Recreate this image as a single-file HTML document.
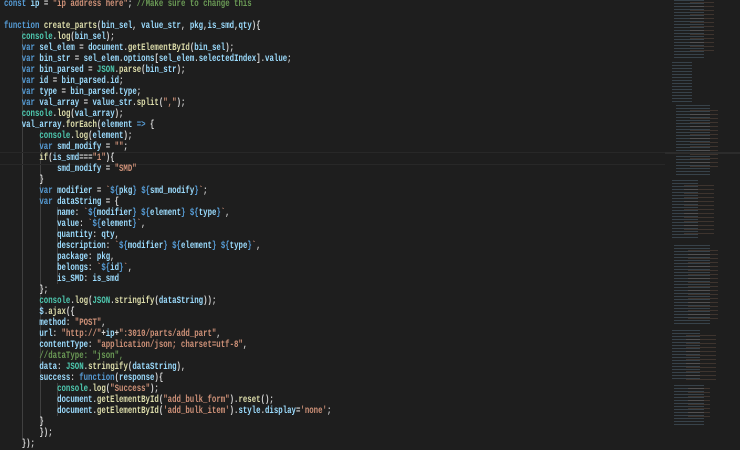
<!DOCTYPE html>
<html><head><meta charset="utf-8"><style>
html,body{margin:0;padding:0;background:#1e1e1e;width:740px;height:449px;overflow:hidden}
#code{position:absolute;left:4px;top:-1.5px;margin:0;font-family:"Liberation Mono",monospace;font-size:10px;line-height:11px;color:#d4d4d4;transform:scaleX(0.737);transform-origin:0 0;white-space:pre;font-weight:bold}
.v{color:#9cdcfe}.k{color:#569cd6}.f{color:#dcdcaa}.s{color:#ce9178}.c{color:#6a9955}.t{color:#4ec9b0}
.g{position:absolute;width:1px;background:#404040}
.mm{position:absolute;background-image:repeating-linear-gradient(to bottom,rgba(120,160,190,.28) 0 1px,transparent 1px 3px)}
.mo{position:absolute;background-image:repeating-linear-gradient(to bottom,rgba(190,140,110,.2) 0 1px,transparent 1px 4px)}
</style></head><body>
<div class="g" style="left:22px;top:31px;height:407px"></div>
<div class="g" style="left:40px;top:130px;height:297px"></div>
<div class="g" style="left:57px;top:207px;height:77px"></div>
<div class="g" style="left:57px;top:383px;height:33px"></div>
<div style="position:absolute;left:0;top:152px;width:665px;height:11px;border-top:1px solid #282828;border-bottom:1px solid #282828"></div>
<pre id="code"><span class="k">const</span> <span class="v">ip</span> = <span class="s">"ip address here"</span>; <span class="c">//Make sure to change this</span>

<span class="k">function</span> <span class="f">create_parts</span>(<span class="v">bin_sel</span>, <span class="v">value_str</span>, <span class="v">pkg</span>,<span class="v">is_smd</span>,<span class="v">qty</span>){
    <span class="t">console</span>.<span class="f">log</span>(<span class="v">bin_sel</span>);
    <span class="k">var</span> <span class="v">sel_elem</span> = <span class="v">document</span>.<span class="f">getElementById</span>(<span class="v">bin_sel</span>);
    <span class="k">var</span> <span class="v">bin_str</span> = <span class="v">sel_elem</span>.<span class="v">options</span>[<span class="v">sel_elem</span>.<span class="v">selectedIndex</span>].<span class="v">value</span>;
    <span class="k">var</span> <span class="v">bin_parsed</span> = <span class="t">JSON</span>.<span class="f">parse</span>(<span class="v">bin_str</span>);
    <span class="k">var</span> <span class="v">id</span> = <span class="v">bin_parsed</span>.<span class="v">id</span>;
    <span class="k">var</span> <span class="v">type</span> = <span class="v">bin_parsed</span>.<span class="v">type</span>;
    <span class="k">var</span> <span class="v">val_array</span> = <span class="v">value_str</span>.<span class="f">split</span>(<span class="s">","</span>);
    <span class="t">console</span>.<span class="f">log</span>(<span class="v">val_array</span>);
    <span class="v">val_array</span>.<span class="f">forEach</span>(<span class="v">element</span> <span class="k">=&gt;</span> {
        <span class="t">console</span>.<span class="f">log</span>(<span class="v">element</span>);
        <span class="k">var</span> <span class="v">smd_modify</span> = <span class="s">""</span>;
        <span class="f">if</span>(<span class="v">is_smd</span>===<span class="s">"1"</span>){
            <span class="v">smd_modify</span> = <span class="s">"SMD"</span>
        }
        <span class="k">var</span> <span class="v">modifier</span> = <span class="s">`</span><span class="k">${</span><span class="v">pkg</span><span class="k">}</span> <span class="k">${</span><span class="v">smd_modify</span><span class="k">}</span><span class="s">`</span>;
        <span class="k">var</span> <span class="v">dataString</span> = {
            <span class="v">name</span>: <span class="s">`</span><span class="k">${</span><span class="v">modifier</span><span class="k">}</span> <span class="k">${</span><span class="v">element</span><span class="k">}</span> <span class="k">${</span><span class="v">type</span><span class="k">}</span><span class="s">`</span>,
            <span class="v">value</span>: <span class="s">`</span><span class="k">${</span><span class="v">element</span><span class="k">}</span><span class="s">`</span>,
            <span class="v">quantity</span>: <span class="v">qty</span>,
            <span class="v">description</span>: <span class="s">`</span><span class="k">${</span><span class="v">modifier</span><span class="k">}</span> <span class="k">${</span><span class="v">element</span><span class="k">}</span> <span class="k">${</span><span class="v">type</span><span class="k">}</span><span class="s">`</span>,
            <span class="v">package</span>: <span class="v">pkg</span>,
            <span class="v">belongs</span>: <span class="s">`</span><span class="k">${</span><span class="v">id</span><span class="k">}</span><span class="s">`</span>,
            <span class="v">is_SMD</span>: <span class="v">is_smd</span>
        };
        <span class="t">console</span>.<span class="f">log</span>(<span class="t">JSON</span>.<span class="f">stringify</span>(<span class="v">dataString</span>));
        <span class="v">$</span>.<span class="f">ajax</span>({
        <span class="v">method</span>: <span class="s">"POST"</span>,
        <span class="v">url</span>: <span class="s">"http://"</span>+<span class="v">ip</span>+<span class="s">":3010/parts/add_part"</span>,
        <span class="v">contentType</span>: <span class="s">"application/json; charset=utf-8"</span>,
        <span class="c">//dataType: "json",</span>
        <span class="v">data</span>: <span class="t">JSON</span>.<span class="f">stringify</span>(<span class="v">dataString</span>),
        <span class="v">success</span>: <span class="k">function</span>(<span class="v">response</span>){
            <span class="t">console</span>.<span class="f">log</span>(<span class="s">"Success"</span>);
            <span class="v">document</span>.<span class="f">getElementById</span>(<span class="s">"add_bulk_form"</span>).<span class="f">reset</span>();
            <span class="v">document</span>.<span class="f">getElementById</span>(<span class="s">'add_bulk_item'</span>).<span class="v">style</span>.<span class="v">display</span>=<span class="s">'none'</span>;
        }
        });
    });</pre>
<div class="mm" style="left:674px;top:0;width:30px;height:60px"></div>
<div class="mo" style="left:690px;top:2px;width:24px;height:50px"></div>
<div class="mm" style="left:672px;top:62px;width:20px;height:40px"></div>
<div class="mm" style="left:676px;top:105px;width:34px;height:70px"></div>
<div class="mo" style="left:690px;top:110px;width:28px;height:60px"></div>
<div class="mm" style="left:672px;top:180px;width:26px;height:60px"></div>
<div class="mo" style="left:684px;top:185px;width:30px;height:50px"></div>
<div class="mm" style="left:674px;top:245px;width:36px;height:80px"></div>
<div class="mo" style="left:688px;top:250px;width:30px;height:70px"></div>
<div class="mm" style="left:672px;top:330px;width:28px;height:50px"></div>
<div class="mo" style="left:686px;top:335px;width:30px;height:45px"></div>
<div class="mm" style="left:674px;top:385px;width:30px;height:40px"></div>
<div class="mo" style="left:688px;top:388px;width:22px;height:30px"></div>
<div style="position:absolute;left:665px;top:152px;width:75px;height:2px;background:#2c2c2c"></div>
</body></html>
